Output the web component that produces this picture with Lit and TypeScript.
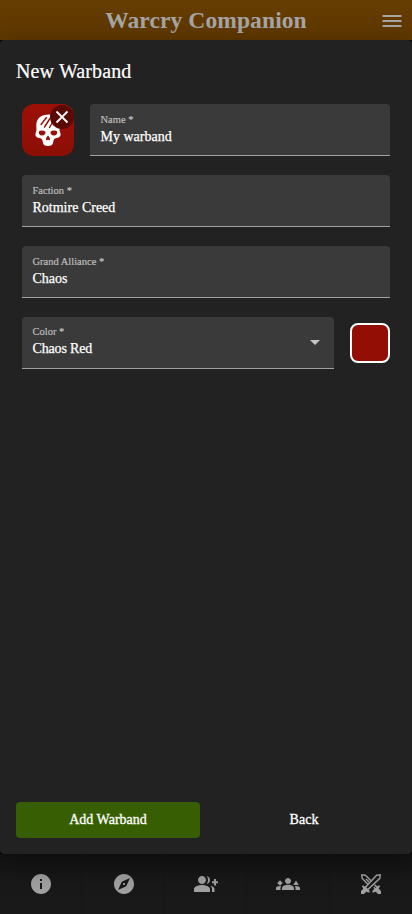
import { LitElement, html, css, svg } from "lit";
import { customElement, property } from "lit/decorators.js";

const icons = {
  info: svg`<path d="M12 2C6.48 2 2 6.48 2 12s4.48 10 10 10 10-4.48 10-10S17.52 2 12 2m1 15h-2v-6h2zm0-8h-2V7h2z"/>`,
  explore: svg`<path d="M12 10.9c-.61 0-1.1.49-1.1 1.1s.49 1.1 1.1 1.1 1.1-.49 1.1-1.1-.49-1.1-1.1-1.1M12 2C6.48 2 2 6.48 2 12s4.48 10 10 10 10-4.48 10-10S17.52 2 12 2m2.19 12.19L6 18l3.81-8.19L18 6z"/>`,
  groupAdd: svg`<path d="M24 9.200h-2V7h-2v2.200h-2v2h2v2.200h2v-2.200h2zM8 12c2.21 0 4-1.79 4-4s-1.79-4-4-4-4 1.79-4 4 1.79 4 4 4m0 1c-2.67 0-8 1.34-8 4v3h16v-3c0-2.66-5.33-4-8-4m4.51-8.95C13.43 5.11 14 6.49 14 8s-.57 2.89-1.49 3.95C14.47 11.7 16 10.04 16 8s-1.53-3.7-3.49-3.95m4.02 9.78C17.42 14.66 18 15.7 18 17v3h2.500v-3c0-1.45-1.800-2.510-3.970-3.170"/>`,
  groups: svg`<path d="M12 12.750c1.63 0 3.07.39 4.24.9 1.08.48 1.76 1.56 1.76 2.73V18H6v-1.61c0-1.18.68-2.26 1.76-2.73 1.17-.52 2.61-.91 4.24-.91M4 8.2 6.800 11 4 13.800 1.200 11zM5.130 14.100c-.37-.06-.74-.1-1.13-.1-.99 0-1.93.21-2.78.58C.48 14.9 0 15.62 0 16.43V18h4.5v-1.610c0-.83.23-1.61.63-2.290M20 8.500 22.800 13h-5.600zM24 16.430c0-.81-.48-1.53-1.22-1.85-.85-.37-1.79-.58-2.78-.58-.39 0-.76.04-1.13.1.4.68.63 1.46.63 2.290V18H24zM12 6c1.66 0 3 1.34 3 3s-1.34 3-3 3-3-1.34-3-3 1.34-3 3-3"/>`,
  swords: svg`<g fill="none" stroke="currentColor" stroke-width="1.500">
      <path d="M6.200 15.400 17.600 3.200 21.200 2.800 20.800 6.400 8.600 17.800z"/>
      <path d="M8.800 12.200 3.200 6.400 2.800 2.800 6.400 3.200 12 8.800M7 7l3 3M14.800 15.200l3 3M15.600 12.800l2.600 2.600"/>
    </g>
    <path d="M2.800 13.800 4.600 13.400 10.600 18.800 10.400 20.800 7.200 19.800 5 22H2V19L4.300 16.700zM21.200 13.800 19.400 13.400 13.400 18.800 13.600 20.800 16.800 19.800 19 22H22V19L19.700 16.700z"/>`,
};

@customElement("form-field")
class FormField extends LitElement {
  @property() label = "";
  @property() value = "";
  @property({ type: Boolean }) select = false;

  static styles = css`
    :host { display: block; flex: 1; min-width: 0; }
    .box {
      box-sizing: border-box; height: 52px; padding: 9px 10px 0 10.5px;
      display: flex; justify-content: space-between;
      background: #3a3a3a; border-bottom: 1px solid #a0a0a0;
      border-radius: 4px 4px 0 0;
    }
    :host([select]) .box { padding-top: 8px; }
    :host([select]) .value { letter-spacing: -.15px; }
    .label { font-size: 10.5px; line-height: 13px; color: #bdbdbd; -webkit-text-stroke: .2px; }
    .value { font-size: 14px; line-height: 22px; color: #fff; -webkit-text-stroke: .25px; }
    .arrow { margin: 15px 4px 0 0; width: 10px; height: 5px; fill: #c4c4c4; }
  `;

  render() {
    return html`<div class="box">
      <div><div class="label">${this.label} *</div><div class="value">${this.value}</div></div>
      ${this.select ? html`<svg class="arrow" viewBox="0 0 10 5"><path d="M0 0h10L5 5z"/></svg>` : ""}
    </div>`;
  }
}

@customElement("app-root")
class AppRoot extends LitElement {
  static styles = css`
    :host {
      display: flex; flex-direction: column; height: 914px; overflow: hidden;
      background: #000; font-family: "Liberation Serif", serif; color: #fff;
    }
    .top {
      flex: none; height: 40px; display: grid; grid-template-columns: 32px 1fr 32px;
      align-items: center; background: linear-gradient(#653d02, #603800); color: #a6a6a6;
    }
    .title { grid-column: 2; text-align: center; font-size: 23.5px; letter-spacing: .1px; line-height: 40px; font-weight: 700; white-space: nowrap; }
    .menu { width: 24px; height: 24px; margin-top: 2px; fill: currentColor; }
    .dialog {
      flex: 1; min-height: 0; display: flex; flex-direction: column; background: #222;
      border-radius: 4px; position: relative; box-shadow: 0 9px 30px rgba(0, 0, 0, .4);
    }
    h2 { margin: 0; padding: 18px 16px 0; font-size: 20px; letter-spacing: .12px; line-height: 27px; font-weight: 400; -webkit-text-stroke: .2px; }
    .form { flex: 1; display: flex; flex-direction: column; gap: 19px; padding: 19px 22px 0; }
    .row { display: flex; gap: 16px; align-items: center; }
    .full { flex: none; }
    .avatar {
      width: 52px; height: 52px; border-radius: 12px; overflow: hidden; position: relative;
      background: linear-gradient(#9d1008, #8c0e05);
    }
    .skull { display: block; width: 52px; height: 52px; }
    .clear {
      position: absolute; top: 1px; right: 0; width: 24px; height: 24px; border-radius: 50%;
      background: #590a05;
    }
    .clear svg { display: block; width: 24px; height: 24px; }
    .swatch { box-sizing: border-box; width: 40px; height: 40px; border: 2px solid #fff; border-radius: 8px; background: #930e05; }
    .actions { display: grid; grid-template-columns: 184px 1fr; padding: 0 0 16px 16px; }
    .button {
      height: 36px; line-height: 35px; text-align: center; border-radius: 4px;
      font-size: 14px; -webkit-text-stroke: .3px;
    }
    .primary { background: #375e02; }
    .back { padding-right: 4px; }
    nav {
      flex: none; height: 60px; display: grid; grid-template-columns: repeat(5, 1fr);
      background: linear-gradient(#141414, #191919 50%, #191919); color: #a1a1a1;
    }
    .tab { display: flex; align-items: center; justify-content: center; box-shadow: inset -1px 0 #151515; }
    .tab:last-child { box-shadow: none; }
    .tab svg { width: 24px; height: 24px; fill: currentColor; }
  `;

  render() {
    return html`
      <header class="top">
        <div class="title">Warcry Companion</div>
        <svg class="menu" viewBox="0 0 24 24"><path d="M2.500 6h19v2h-19zM2.500 11h19v2h-19zM2.500 16h19v2h-19z"/></svg>
      </header>
      <section class="dialog">
        <h2>New Warband</h2>
        <div class="form">
          <div class="row">
            <div class="avatar">
              <svg class="skull" viewBox="0 0 52 52">
                <path fill="#fff" d="M27 10.500c-8 0-12.500 4-12.700 10.500-.1 3.500.7 5-.6 8-.9 2.200.3 4.500 3.300 5 2.300.4 3.600 1 3.800 4 .2 2.700 1.700 4 5.200 4s5-1.300 5.200-4c.2-3 1.500-3.600 3.800-4 3-.5 4.200-2.800 3.300-5-1.300-3-.4-4.500-.6-8C37.500 14.500 34 10.500 27 10.500z"/>
                <path fill="#970f06" d="M17 27.200q3.500-1.700 6.500.6c.4 2.600-1.800 4-4.100 3.700-2.100-.3-3-2.300-2.400-4.300M35 27.200q-3.500-1.700-6.500.6c-.4 2.600 1.800 4 4.100 3.700 2.100-.3 3-2.300 2.400-4.300M26 31.500c1.200 1.300 2.400 3.100 2 4.300-.6.800-1.400.3-2-.4-.6.7-1.400 1.200-2 .4-.4-1.200.8-3 2-4.300"/>
                <path fill="none" stroke="#970f06" stroke-width="1.400" stroke-linecap="round" d="M24.500 13.500l-5.500 7M28 14.500l-5.500 8.500M31 17.500l-3.500 6"/>
              </svg>
              <div class="clear"><svg viewBox="0 0 24 24"><path d="M6.500 6.500l11 11M17.500 6.500l-11 11" fill="none" stroke="#fff" stroke-width="1.800"/></svg></div>
            </div>
            <form-field label="Name" value="My warband"></form-field>
          </div>
          <form-field class="full" label="Faction" value="Rotmire Creed"></form-field>
          <form-field class="full" label="Grand Alliance" value="Chaos"></form-field>
          <div class="row">
            <form-field label="Color" value="Chaos Red" select></form-field>
            <div class="swatch"></div>
          </div>
        </div>
        <div class="actions">
          <div class="button primary">Add Warband</div>
          <div class="button back">Back</div>
        </div>
      </section>
      <nav>
        ${Object.values(icons).map((icon) => html`<div class="tab"><svg viewBox="0 0 24 24">${icon}</svg></div>`)}
      </nav>
    `;
  }
}
